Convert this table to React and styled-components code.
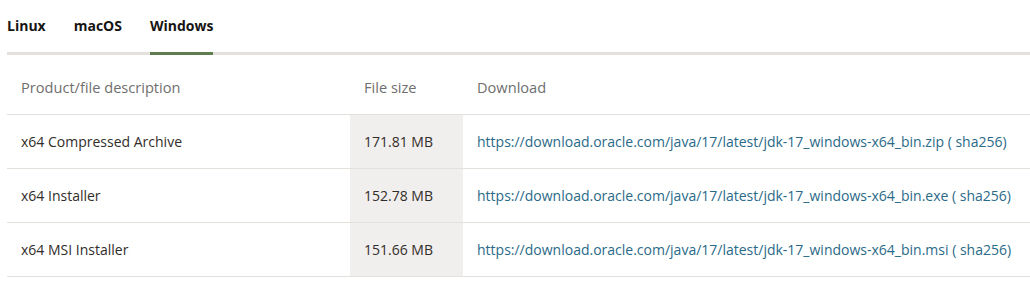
import React from 'react'
import styled, { createGlobalStyle } from 'styled-components'

const Global = createGlobalStyle`
  body {
    margin: 0;
    background: #fff;
    font-family: "Open Sans", "Noto Sans", sans-serif;
  }
`

const Wrapper = styled.div`
  padding: 0 0 0 7px;
  width: 1023px;
`

const Tabs = styled.div`
  display: flex;
  border-bottom: 3px solid #e4e1dc;
  height: 52px;
`

const Tab = styled.div`
  font-size: 14px;
  font-weight: 700;
  color: #161513;
  margin-right: 28px;
  display: flex;
  align-items: center;
  height: 55px;
  box-sizing: border-box;
  padding-bottom: 2px;
  border-bottom: 3px solid ${(p) => (p.active ? '#5f7d4f' : 'transparent')};
`

const Table = styled.table`
  width: 100%;
  border-collapse: collapse;
  font-size: 14px;
`

const Th = styled.th`
  text-align: left;
  font-weight: 400;
  font-size: 14.6px;
  color: #6f6f6f;
  height: 59px;
  padding: 6px 14px 0;
  border-bottom: 1px solid #e4e1dc;
  width: ${(p) => p.w || 'auto'};
  box-sizing: border-box;
`

const Td = styled.td`
  height: 54px;
  padding: 0 14px;
  color: #312d2a;
  border-bottom: 1px solid #e4e1dc;
  background: ${(p) => (p.shade ? '#f1efed' : 'transparent')};
  box-sizing: border-box;
`

const Link = styled.a`
  color: #2a6a88;
  text-decoration: none;
`

const rows = [
  { name: 'x64 Compressed Archive', size: '171.81 MB', ext: 'zip' },
  { name: 'x64 Installer', size: '152.78 MB', ext: 'exe' },
  { name: 'x64 MSI Installer', size: '151.66 MB', ext: 'msi' },
]

const App = () => {
  return (
    <Wrapper>
      <Global />
      <Tabs>
        <Tab>Linux</Tab>
        <Tab>macOS</Tab>
        <Tab active>Windows</Tab>
      </Tabs>
      <Table>
        <thead>
          <tr>
            <Th w="343px">Product/file description</Th>
            <Th w="113px">File size</Th>
            <Th>Download</Th>
          </tr>
        </thead>
        <tbody>
          {rows.map((r) => {
            const url = `https://download.oracle.com/java/17/latest/jdk-17_windows-x64_bin.${r.ext}`
            return (
              <tr key={r.ext}>
                <Td>{r.name}</Td>
                <Td shade>{r.size}</Td>
                <Td>
                  <Link href={url}>{url}</Link> <Link href={url + '.sha256'}>( sha256)</Link>
                </Td>
              </tr>
            )
          })}
        </tbody>
      </Table>
    </Wrapper>
  )
}

export default App
